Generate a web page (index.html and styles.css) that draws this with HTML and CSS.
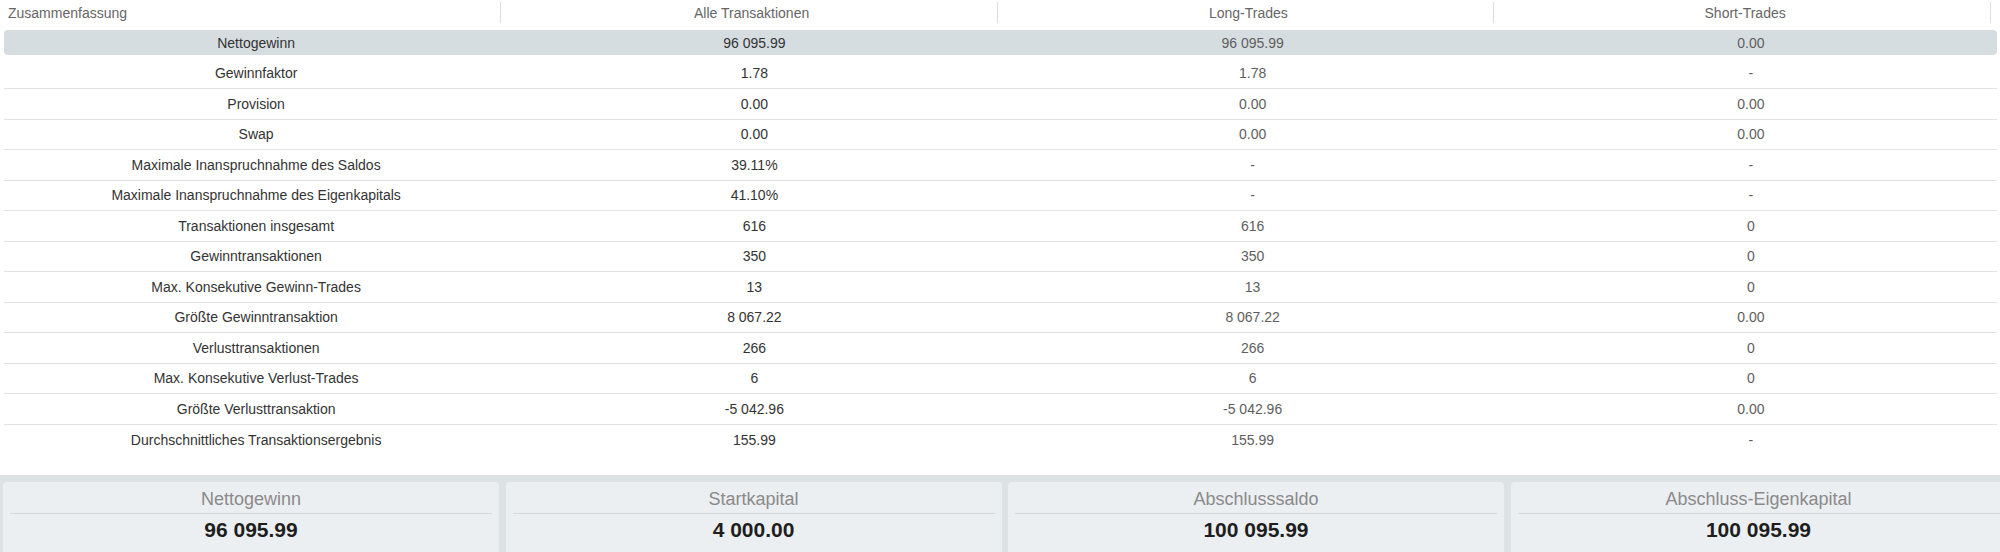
FILE: index.html
```html
<!DOCTYPE html>
<html lang="de">
<head>
<meta charset="utf-8">
<title>Zusammenfassung</title>
<link rel="stylesheet" href="styles.css">
</head>
<body>
<section class="summary">
  <div class="head">
    <div class="hcell first">Zusammenfassung</div>
    <div class="hcell">Alle Transaktionen</div>
    <div class="hcell">Long-Trades</div>
    <div class="hcell">Short-Trades</div>
  </div>
  <div class="row hl"><div class="c">Nettogewinn</div><div class="c">96 095.99</div><div class="c lt">96 095.99</div><div class="c lt">0.00</div></div>
  <div class="row sep"><div class="c">Gewinnfaktor</div><div class="c">1.78</div><div class="c lt">1.78</div><div class="c lt">-</div></div>
  <div class="row sep"><div class="c">Provision</div><div class="c">0.00</div><div class="c lt">0.00</div><div class="c lt">0.00</div></div>
  <div class="row sep"><div class="c">Swap</div><div class="c">0.00</div><div class="c lt">0.00</div><div class="c lt">0.00</div></div>
  <div class="row sep"><div class="c">Maximale Inanspruchnahme des Saldos</div><div class="c">39.11%</div><div class="c lt">-</div><div class="c lt">-</div></div>
  <div class="row sep"><div class="c">Maximale Inanspruchnahme des Eigenkapitals</div><div class="c">41.10%</div><div class="c lt">-</div><div class="c lt">-</div></div>
  <div class="row sep"><div class="c">Transaktionen insgesamt</div><div class="c">616</div><div class="c lt">616</div><div class="c lt">0</div></div>
  <div class="row sep"><div class="c">Gewinntransaktionen</div><div class="c">350</div><div class="c lt">350</div><div class="c lt">0</div></div>
  <div class="row sep"><div class="c">Max. Konsekutive Gewinn-Trades</div><div class="c">13</div><div class="c lt">13</div><div class="c lt">0</div></div>
  <div class="row sep"><div class="c">Größte Gewinntransaktion</div><div class="c">8 067.22</div><div class="c lt">8 067.22</div><div class="c lt">0.00</div></div>
  <div class="row sep"><div class="c">Verlusttransaktionen</div><div class="c">266</div><div class="c lt">266</div><div class="c lt">0</div></div>
  <div class="row sep"><div class="c">Max. Konsekutive Verlust-Trades</div><div class="c">6</div><div class="c lt">6</div><div class="c lt">0</div></div>
  <div class="row sep"><div class="c">Größte Verlusttransaktion</div><div class="c">-5 042.96</div><div class="c lt">-5 042.96</div><div class="c lt">0.00</div></div>
  <div class="row"><div class="c">Durchschnittliches Transaktionsergebnis</div><div class="c">155.99</div><div class="c lt">155.99</div><div class="c lt">-</div></div>
</section>
<section class="band">
  <div class="cards">
    <div class="card"><div class="ctitle">Nettogewinn</div><div class="cval">96 095.99</div></div>
    <div class="card"><div class="ctitle">Startkapital</div><div class="cval">4 000.00</div></div>
    <div class="card"><div class="ctitle">Abschlusssaldo</div><div class="cval">100 095.99</div></div>
    <div class="card"><div class="ctitle">Abschluss-Eigenkapital</div><div class="cval">100 095.99</div></div>
  </div>
</section>
</body>
</html>
```

FILE: styles.css
```css
html, body {
  margin: 0;
  padding: 0;
  overflow: hidden;
  background: #ffffff;
  font-family: "Liberation Sans", Arial, sans-serif;
}

.summary {
  padding: 0 3px 20px 4px;
  font-size: 14px;
}

.head {
  display: grid;
  grid-template-columns: repeat(4, 1fr);
  margin-right: 6px;
  height: 28px;
  box-sizing: border-box;
  padding-top: 2px;
}

.hcell {
  height: 21px;
  line-height: 22px;
  text-align: center;
  color: #666666;
  border-right: 1px solid #dedede;
  padding-left: 6px;
}

.hcell.first {
  text-align: left;
  padding-left: 4px;
}

.row {
  display: grid;
  grid-template-columns: repeat(4, 1fr);
  height: 30.5px;
  box-sizing: border-box;
  align-items: center;
}

.row.sep {
  border-bottom: 1px solid #e2e2e2;
}

.row.hl {
  height: 25px;
  margin: 2px 0 3.5px;
  background: #d6dde1;
  border-radius: 4px;
}

.c {
  text-align: center;
  color: #333333;
  padding-left: 6px;
  white-space: nowrap;
}

.c.lt {
  color: #5e5e5e;
}

.band {
  background: #dde3e5;
  padding-top: 7px;
  height: 77px;
  overflow: hidden;
}

.cards {
  display: grid;
  grid-template-columns: repeat(4, 496px);
  column-gap: 6.5px;
  padding-left: 3px;
}

.card {
  background: #eceff1;
  border-radius: 4px 4px 0 0;
  height: 90px;
  padding: 0 7px;
}

.ctitle {
  text-align: center;
  font-size: 18px;
  line-height: 22px;
  padding: 6px 0 3px;
  color: #8a8a8a;
  border-bottom: 1px solid #d2d8db;
}

.cval {
  text-align: center;
  font-size: 21px;
  font-weight: bold;
  line-height: 24px;
  padding-top: 4px;
  color: #1e1e1e;
}
```
